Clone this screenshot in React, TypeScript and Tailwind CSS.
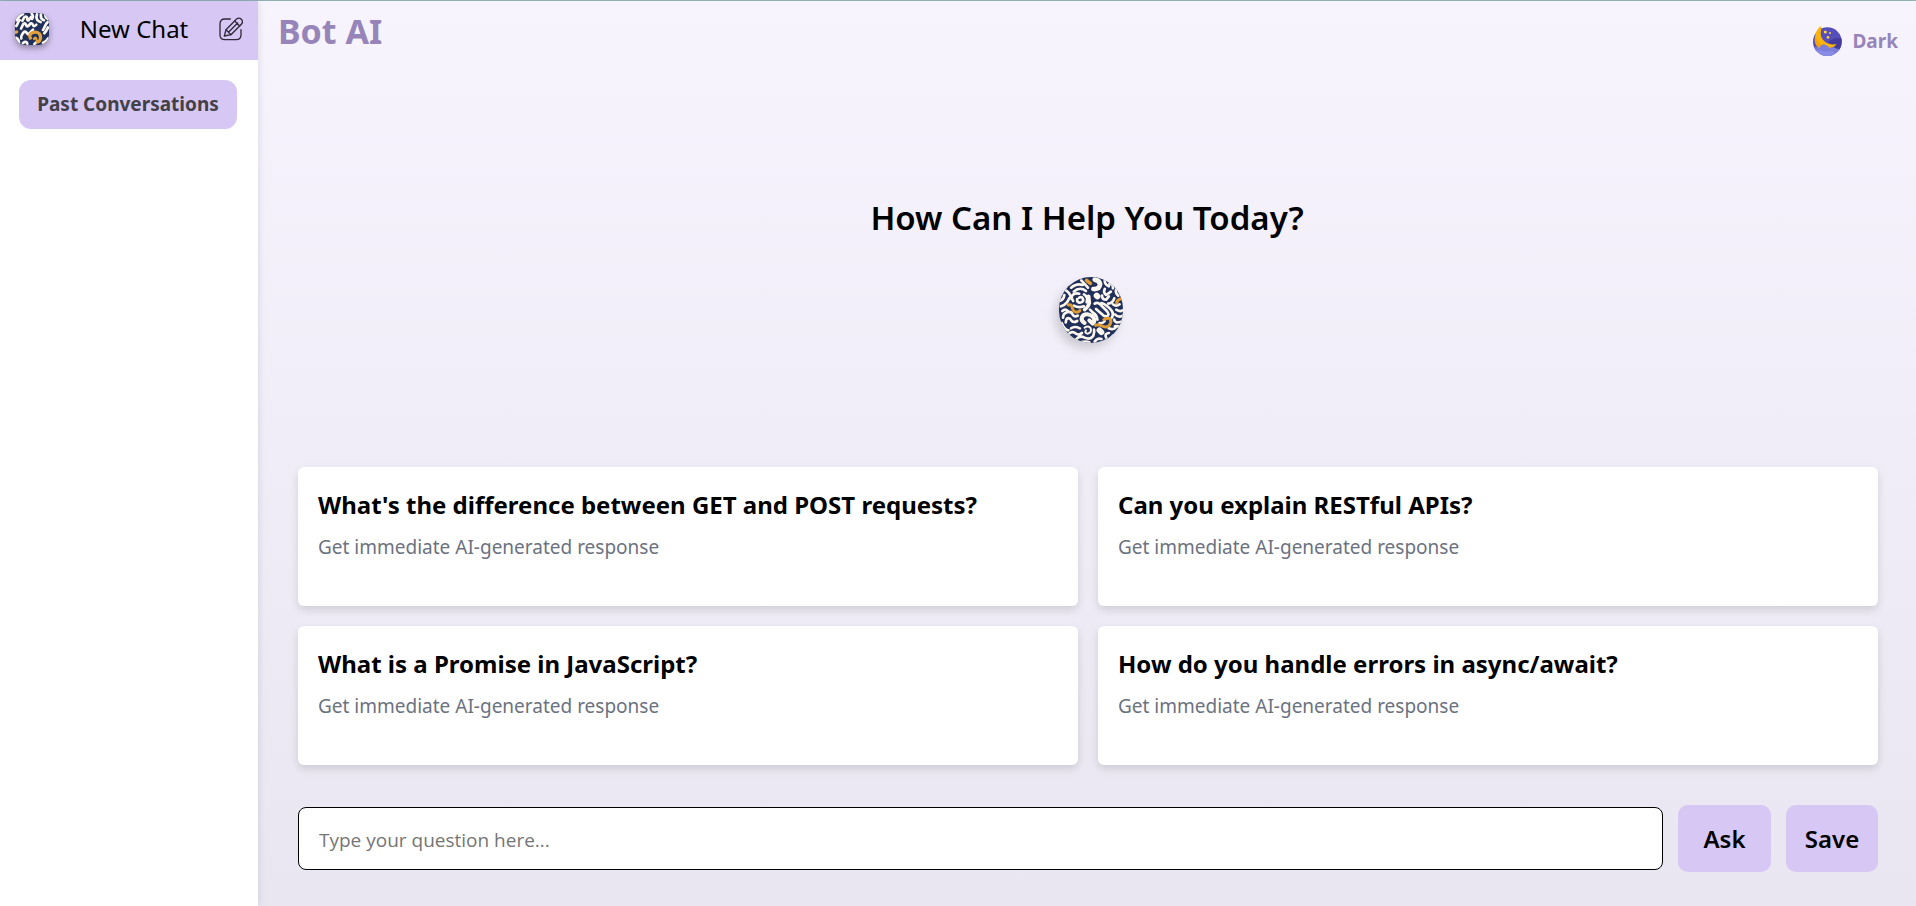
import { useState } from "react";

const prompts = [
  "What's the difference between GET and POST requests?",
  "Can you explain RESTful APIs?",
  "What is a Promise in JavaScript?",
  "How do you handle errors in async/await?",
];

function SidebarLogo() {
  return (
    <svg viewBox="0 0 102 98" preserveAspectRatio="none" className="h-8 w-[34px] rounded-[10px] shadow-[0_3px_6px_rgba(0,0,0,0.35)]" aria-hidden="true">
      <rect width="102" height="98" fill="#21305a" />
      <g fill="none" stroke="#fbf6ee" strokeWidth="8" strokeLinecap="round" strokeLinejoin="round">
        <path d="M5 22C10 10 16 6 24 3" />
        <path d="M4 40C10 32 8 26 14 22" />
        <path d="M22 24L28 13Q36 8 37 16Q36 26 41 22L48 12" />
        <path d="M18 48L24 35Q30 28 33 36Q36 45 42 38Q48 27 53 35Q56 45 64 36" />
        <path d="M19 78C16 70 22 66 25 60Q31 53 36 62Q40 70 45 60L54 51" />
        <path d="M3 76Q12 80 12 92" />
        <path d="M50 2Q57 10 51 18M66 4C62 16 66 24 77 28M78 2C76 14 80 20 87 22M92 2Q88 12 98 18" />
        <path d="M98 28C90 34 90 44 84 52M99 44Q94 56 88 62" />
        <path d="M24 92Q34 84 37 94M84 91Q94 88 99 78M58 95L65 89" />
      </g>
      <g fill="none" stroke="#e0a03c" strokeWidth="10" strokeLinecap="round">
        <path d="M46 77C36 58 72 52 76 69C79 84 70 90 66 87" />
        <path d="M57 79Q62 71 64 80" strokeWidth="7" />
        <path d="M0 60L5 58" />
      </g>
    </svg>
  );
}

function RoundLogo() {
  return (
    <svg viewBox="6 10 190 198" preserveAspectRatio="none" className="h-[66px] w-16 rounded-full shadow-[-4px_6px_10px_rgba(0,0,0,0.15)]" aria-hidden="true">
      <rect x="6" y="10" width="190" height="198" fill="#21305a" />
      <g fill="none" stroke="#fbf6ee" strokeWidth="8" strokeLinecap="round" strokeLinejoin="round">
        <path d="M8 82Q20 78 22 64M12 98Q30 92 36 74M26 50Q42 60 40 74" />
        <path d="M42 42Q58 28 76 34M50 54C62 42 76 44 86 52M72 20Q80 28 92 42" />
        <path d="M48 82C36 66 52 56 66 60M60 76C58 88 72 92 78 80Q76 66 66 72M80 62Q94 70 88 86" />
        <path d="M50 96Q64 104 80 98" />
        <path d="M94 68L96 88Q94 98 82 108" strokeWidth="11" />
        <path d="M112 18Q126 20 128 32Q126 48 108 46" strokeWidth="14" />
        <path d="M142 20Q140 32 154 38M156 30Q168 32 166 44M142 46Q136 56 146 64L160 54M176 46Q172 58 182 66" />
        <path d="M118 66L120 68" strokeWidth="18" />
        <path d="M134 66Q134 78 146 78L154 68M152 90Q166 88 170 74M186 92Q176 100 166 92" />
        <path d="M112 90Q120 84 128 92L148 112Q158 124 148 128Q140 130 132 120L116 106M132 88Q146 92 160 108Q172 122 160 136" />
        <path d="M176 108Q188 116 194 110M172 122Q184 134 194 126M170 138Q172 150 190 144M172 158Q184 154 192 166" />
        <path d="M16 112Q24 104 32 112M18 132C18 116 40 108 46 122Q52 132 62 126M26 146C28 128 38 132 44 142Q50 148 60 142M14 148Q22 170 34 170" />
        <path d="M82 148C66 138 74 120 92 122C110 126 116 140 106 150L96 140" strokeWidth="12" />
        <path d="M98 108L108 118Q118 124 120 138" />
        <path d="M82 162Q94 154 100 164Q104 176 92 180Q80 178 86 170" strokeWidth="6" />
        <path d="M42 164Q52 156 68 164M36 180Q46 170 56 180Q66 186 74 178M56 198Q68 184 82 192Q98 200 108 186Q112 176 110 168" />
        <path d="M126 170L132 176" strokeWidth="17" />
        <path d="M70 206Q86 202 96 206M112 204Q120 192 132 196M146 192Q140 180 154 178M154 164Q168 170 176 160M142 202Q160 198 166 186" />
        <path d="M126 148Q136 150 142 142" strokeWidth="7" />
      </g>
      <g fill="none" stroke="#df9c35" strokeWidth="9" strokeLinecap="round">
        <path d="M34 94C48 90 42 105 51 113Q60 119 68 111" />
        <path d="M115 155C127 147 134 163 147 160C161 156 163 140 156 135Q147 132 139 138" />
        <path d="M88 20L99 29" strokeWidth="11" />
        <path d="M177 88Q179 78 188 76" />
      </g>
    </svg>
  );
}

function EditIcon() {
  return (
    <svg viewBox="0 0 72 72" className="size-6" fill="none" stroke="#2f2a3a" strokeWidth="4" strokeLinecap="round" strokeLinejoin="round" aria-hidden="true">
      <path d="M34 6H18Q3 6 3 21V53Q3 68 18 68H51Q66 68 66 53V38" />
      <path d="M16 57L21 38L52 7Q60 0 67 7Q74 14 67 22L36 53Z" />
      <path d="M21 38L36 53M47 12L62 27M29 45L56 18" />
    </svg>
  );
}

function MoonIcon() {
  return (
    <svg viewBox="0 0 90 90" className="size-[30px]" aria-hidden="true">
      <clipPath id="sky">
        <circle cx="46" cy="47" r="43" />
      </clipPath>
      <circle cx="46" cy="47" r="43" fill="#564eba" />
      <g clipPath="url(#sky)">
        <path d="M50 46Q66 34 90 36V70H50Z" fill="#433c9c" />
      </g>
      <path d="M26 0C4 18 4 50 22 68C42 74 66 66 74 54C52 60 26 46 26 22Q30 10 26 0Z" fill="#fbb40a" />
      <path d="M10 28C4 48 12 62 24 68L32 60C20 52 14 42 10 28Z" fill="#f2a20c" />
      <g clipPath="url(#sky)">
        <path d="M0 70Q10 60 22 65Q30 52 40 56Q48 59 53 66Q66 60 74 68L90 70V90H0Z" fill="#7b7edb" />
        <path d="M8 78Q24 68 40 78Q56 70 68 80L60 90H20Z" fill="#898ce4" />
      </g>
      <g fill="#fdd835">
        <circle cx="40" cy="18" r="4.5" />
        <circle cx="54" cy="21" r="3" />
        <circle cx="48" cy="34" r="4" />
      </g>
    </svg>
  );
}

export default function App() {
  const [question, setQuestion] = useState("");

  return (
    <div className="flex min-h-screen border-t border-[#8fb3b5] bg-white font-['Noto_Sans',sans-serif] text-black">
      <aside className="z-10 w-[258px] shrink-0 bg-white shadow-[0_0_8px_rgba(0,0,0,0.12)]">
        <button type="button" className="flex h-[59px] w-full items-center justify-between bg-[#d7c7f4] px-[15px] pb-[3px]">
          <SidebarLogo />
          <span className="text-2xl">New Chat</span>
          <EditIcon />
        </button>
        <div className="px-[19px] pt-5">
          <button type="button" className="h-[49px] w-[218px] rounded-xl bg-[#d7c7f4] text-[19px] font-bold text-[#414146]">
            Past Conversations
          </button>
        </div>
      </aside>

      <main className="flex min-w-0 flex-1 flex-col bg-linear-to-b from-[#f7f4fe] to-[#e9e6f1]">
        <header className="flex items-start justify-between pt-[7px] pr-[18px] pl-5">
          <h1 className="text-[34px] leading-[46px] font-bold text-[#9785ba]">Bot AI</h1>
          <button type="button" className="mt-[17px] flex items-center gap-[10px] text-[19px] leading-8 font-bold text-[#9785ba]">
            <MoonIcon />
            Dark
          </button>
        </header>

        <section className="flex flex-1 flex-col items-center gap-9 pt-[138px]">
          <h2 className="text-[33px] leading-[46px] font-semibold">How Can I Help You Today?</h2>
          <div className="pl-2">
            <RoundLogo />
          </div>
        </section>

        <section className="grid grid-cols-2 gap-5 pr-[38px] pl-10">
          {prompts.map((prompt) => (
            <button
              key={prompt}
              type="button"
              onClick={() => setQuestion(prompt)}
              className="flex h-[139px] flex-col items-start rounded-md bg-white px-5 pt-5 text-left shadow-[0_4px_8px_rgba(0,0,0,0.12)]"
            >
              <span className="text-2xl leading-9 font-bold">{prompt}</span>
              <span className="mt-2 text-[19px] leading-8 text-[#6b7280]">Get immediate AI-generated response</span>
            </button>
          ))}
        </section>

        <form className="flex items-center gap-[15px] pt-10 pr-[38px] pb-[34px] pl-10" onSubmit={(event) => event.preventDefault()}>
          <input
            type="text"
            aria-label="Your question"
            value={question}
            onChange={(event) => setQuestion(event.target.value)}
            placeholder="Type your question here..."
            className="h-[63px] min-w-0 flex-1 rounded-lg border border-black bg-white px-5 pt-0.5 font-['Open_Sans',sans-serif] text-[19px] placeholder:text-[#757575]"
          />
          <button type="submit" className="h-[67px] w-[93px] rounded-[10px] bg-[#d7c7f4] text-2xl font-semibold">
            Ask
          </button>
          <button type="button" className="h-[67px] w-[92px] rounded-[10px] bg-[#d7c7f4] text-2xl font-semibold">
            Save
          </button>
        </form>
      </main>
    </div>
  );
}
